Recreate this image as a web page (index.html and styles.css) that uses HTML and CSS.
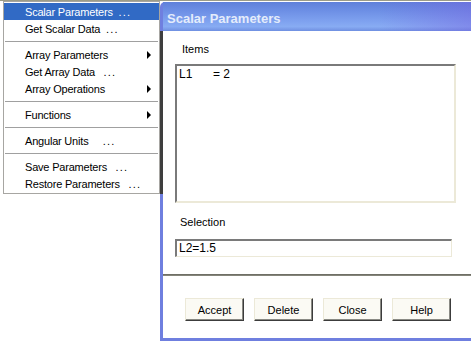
FILE: index.html
```
<html lang="en">
	<head>
		<meta charset="utf-8" />
		<title>Scalar Parameters</title>
		<link rel="stylesheet" href="styles.css">
	</head>
	<body>
		<div id="desktop">
			<div class="menu">
				<div class="item active">Scalar Parameters&nbsp;&nbsp;<span class="dots">...</span></div>
				<div class="item">Get Scalar Data&nbsp;&nbsp;<span class="dots">...</span></div>
				<div class="sep"></div>
				<div class="item">Array Parameters<span class="arrow"></span></div>
				<div class="item">Get Array Data&nbsp;&nbsp;&nbsp;<span class="dots">...</span></div>
				<div class="item">Array Operations<span class="arrow"></span></div>
				<div class="sep"></div>
				<div class="item">Functions<span class="arrow"></span></div>
				<div class="sep"></div>
				<div class="item">Angular Units&nbsp;&nbsp;&nbsp;&nbsp;&nbsp;<span class="dots">...</span></div>
				<div class="sep"></div>
				<div class="item">Save Parameters&nbsp;&nbsp;&nbsp;<span class="dots">...</span></div>
				<div class="item">Restore Parameters&nbsp;&nbsp;&nbsp;<span class="dots">...</span></div>
			</div>

			<div class="dialog">
				<div class="titlebar">Scalar Parameters</div>
				<div class="body">
					<div class="label">Items</div>
					<div class="listbox">
						<div class="row"><span class="key">L1</span><span>= 2</span></div>
					</div>
					<div class="label second">Selection</div>
					<div class="field">L2=1.5</div>
				</div>
				<div class="divider"></div>
				<div class="buttons">
					<div class="button">Accept</div>
					<div class="button">Delete</div>
					<div class="button">Close</div>
					<div class="button">Help</div>
				</div>
			</div>
		</div>
	</body>
</html>
```

FILE: styles.css
```
body
{
	background: #ffffff;
	margin: 0;
	padding: 0;
	color: #000000;
	font-family: "Liberation Sans", Arial, sans-serif;
	font-size: 11px;
	overflow: hidden;
}

div#desktop
{
	display: flex;
	align-items: flex-start;
	width: 471px;
	height: 341px;
	box-sizing: border-box;
	border-top: 1px solid #9c9c88;
}

/* popup menu */
div.menu
{
	position: relative;
	z-index: 1;
	width: 157px;
	box-sizing: border-box;
	margin-left: 3px;
	padding: 1px 0;
	background: #ffffff;
	border: 1px solid #a7a6a2;
}

div.menu::after
{
	content: "";
	position: absolute;
	top: 29px;
	right: -4px;
	bottom: -1px;
	width: 3px;
	background: #3e3e3e;
}

div.menu div.item
{
	display: flex;
	align-items: center;
	height: 17px;
	padding: 0 8px 0 21px;
	letter-spacing: -0.2px;
	white-space: nowrap;
}

div.menu div.item.active
{
	background: #316ac5;
	color: #ffffff;
}

div.menu span.dots
{
	letter-spacing: 1.2px;
}

div.menu span.arrow
{
	margin-left: auto;
	width: 0;
	height: 0;
	border-top: 4px solid transparent;
	border-bottom: 4px solid transparent;
	border-left: 4px solid #000000;
}

div.menu div.sep
{
	height: 9px;
	margin: 0 1px;
	background: linear-gradient(#ffffff 4px, #a0a0a0 4px, #a0a0a0 5px, #ffffff 5px);
}

/* dialog */
div.dialog
{
	flex: 1;
	height: 339px;
	margin-top: 1px;
	box-sizing: border-box;
	display: flex;
	flex-direction: column;
	border-left: 3px solid #6f7fdf;
	border-bottom: 3px solid #6f7fdf;
	border-top-left-radius: 5px;
	background: #ffffff;
}

div.titlebar
{
	height: 29px;
	box-sizing: border-box;
	padding: 9px 0 0 4px;
	font-size: 13px;
	font-weight: bold;
	color: #e4ecfb;
	background:
		linear-gradient(90deg, rgba(120, 100, 225, 0) 70%, rgba(120, 100, 225, 0.45) 100%),
		linear-gradient(180deg, #5f80da 0%, #6d8fe5 30%, #7ea1ef 65%, #88acf3 85%, #6f8fe1 100%);
}

div.body
{
	padding: 12px 0 0 12px;
}

div.label
{
	height: 13px;
	line-height: 13px;
	padding-left: 7px;
}

div.label.second
{
	margin-top: 13px;
	padding-left: 5px;
}

div.listbox
{
	width: 281px;
	height: 139px;
	margin-top: 8px;
	box-sizing: border-box;
	padding: 1px 2px;
	border-style: solid;
	border-width: 2px 2px 2px 2px;
	border-color: #7a7a7a #ece9d8 #ece9d8 #7a7a7a;
	font-size: 12px;
}

div.listbox div.row
{
	height: 15px;
	line-height: 15px;
}

div.listbox span.key
{
	display: inline-block;
	width: 34px;
}

div.field
{
	width: 277px;
	height: 18px;
	margin-top: 10px;
	box-sizing: border-box;
	padding: 0 2px;
	line-height: 15px;
	border-style: solid;
	border-width: 2px 1px 1px 2px;
	border-color: #7a7a7a #ece9d8 #ece9d8 #7a7a7a;
	font-size: 12px;
}

div.divider
{
	height: 2px;
	margin-top: 17px;
	background: linear-gradient(#6f6f66 1px, #85857a 1px);
}

div.buttons
{
	display: flex;
	gap: 10px;
	margin-top: 22px;
	padding-left: 22px;
}

div.button
{
	width: 59px;
	height: 23px;
	box-sizing: border-box;
	display: flex;
	align-items: center;
	justify-content: center;
	background: #fbfaf4;
	border: 1px solid;
	border-color: #ece9d8 #3c3c3c #3c3c3c #ece9d8;
	box-shadow: inset -1px -1px 0 #8a8a84;
}
```
